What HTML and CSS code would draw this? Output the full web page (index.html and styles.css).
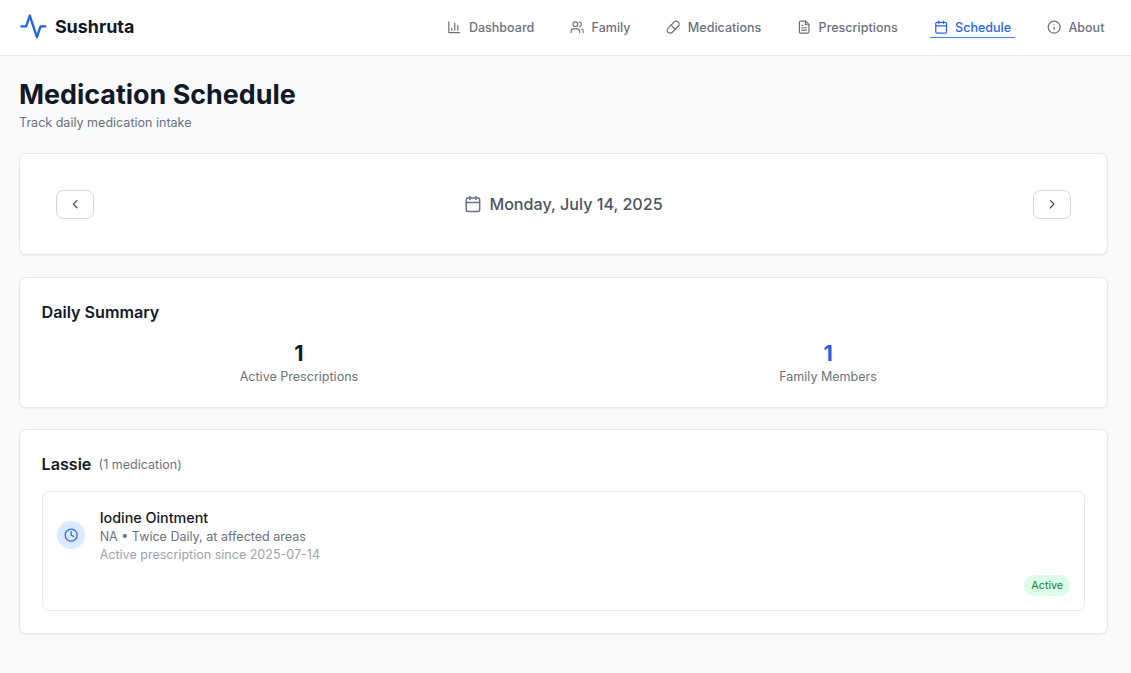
FILE: index.html
```html
<!DOCTYPE html>
<html lang="en">
<head>
<meta charset="utf-8">
<title>Sushruta</title>
<link rel="stylesheet" href="styles.css">
</head>
<body>
<header class="header">
  <div class="brand">
    <svg class="brand-icon" viewBox="0 0 24 24"><path d="M22 12h-4l-3 9L9 3l-3 9H2"/></svg>
    <span>Sushruta</span>
  </div>
  <nav class="nav">
    <a class="nav-link"><svg class="nav-icon" viewBox="0 0 24 24"><path d="M3 3v18h18"/><path d="M8 17v-3M13 17V5M18 17V9"/></svg>Dashboard</a>
    <a class="nav-link"><svg class="nav-icon" viewBox="0 0 24 24"><path d="M16 21v-2a4 4 0 0 0-4-4H6a4 4 0 0 0-4 4v2"/><circle cx="9" cy="7" r="4"/><path d="M22 21v-2a4 4 0 0 0-3-3.87M16 3.13a4 4 0 0 1 0 7.75"/></svg>Family</a>
    <a class="nav-link"><svg class="nav-icon" viewBox="0 0 24 24"><path d="m10.5 20.500 10-10a4.950 4.950 0 1 0-7-7l-10 10a4.950 4.950 0 1 0 7 7Z"/><path d="m8.500 8.500 7 7"/></svg>Medications</a>
    <a class="nav-link"><svg class="nav-icon" viewBox="0 0 24 24"><path d="M14.500 2H6a2 2 0 0 0-2 2v16a2 2 0 0 0 2 2h12a2 2 0 0 0 2-2V7.500L14.500 2z"/><path d="M14 2v6h6M16 13H8M16 17H8M10 9H8"/></svg>Prescriptions</a>
    <a class="nav-link nav-link-active"><svg class="nav-icon" viewBox="0 0 24 24"><rect x="3" y="4" width="18" height="18" rx="2"/><path d="M16 2v4M8 2v4M3 10h18"/></svg>Schedule</a>
    <a class="nav-link"><svg class="nav-icon" viewBox="0 0 24 24"><circle cx="12" cy="12" r="10"/><path d="M12 16v-4M12 8h.01"/></svg>About</a>
  </nav>
</header>
<main class="main">
  <h1 class="title">Medication Schedule</h1>
  <p class="subtitle">Track daily medication intake</p>
  <section class="card date-card">
    <button class="step"><svg class="step-icon" viewBox="0 0 24 24"><path d="m15 18-6-6 6-6"/></svg></button>
    <div class="date"><svg class="date-icon" viewBox="0 0 24 24"><rect x="3" y="4" width="18" height="18" rx="2"/><path d="M16 2v4M8 2v4M3 10h18"/></svg>Monday, July 14, 2025</div>
    <button class="step"><svg class="step-icon" viewBox="0 0 24 24"><path d="m9 18 6-6-6-6"/></svg></button>
  </section>
  <section class="card summary-card">
    <h2 class="heading">Daily Summary</h2>
    <div class="stats">
      <div class="stat"><div class="value">1</div><div class="label">Active Prescriptions</div></div>
      <div class="stat"><div class="value value-blue">1</div><div class="label">Family Members</div></div>
    </div>
  </section>
  <section class="card member-card">
    <div class="member"><h2 class="heading">Lassie</h2><span class="count">(1 medication)</span></div>
    <div class="medication">
      <div class="medication-row">
        <div class="clock"><svg class="nav-icon" viewBox="0 0 24 24"><circle cx="12" cy="12" r="10"/><path d="M12 6v6l4 2"/></svg></div>
        <div>
          <h3 class="name">Iodine Ointment</h3>
          <p class="dose">NA • Twice Daily, at affected areas</p>
          <p class="since">Active prescription since 2025-07-14</p>
        </div>
      </div>
      <span class="badge">Active</span>
    </div>
  </section>
</main>
</body>
</html>
```
FILE: styles.css
```css
* { box-sizing: border-box; margin: 0; }
body { background: #f9fafb; color: #111827; font-family: Inter, "Liberation Sans", sans-serif; font-size: 12.54px; line-height: 18px; min-height: 673px; }
svg { display: block; flex: none; fill: none; stroke: currentColor; stroke-width: 2; stroke-linecap: round; stroke-linejoin: round; }
.header { display: flex; align-items: center; justify-content: space-between; height: 56px; padding: 0 23px 2px 19px; background: #fff; border-bottom: 1px solid #e5e7eb; }
.brand { display: flex; align-items: center; gap: 7.2px; font-size: 17.92px; font-weight: 700; line-height: 25px; }
.brand-icon { width: 28.7px; height: 28.7px; color: #2563eb; }
.nav { display: flex; gap: 28.67px; padding-top: 2px; }
.nav-link { display: flex; align-items: center; gap: 7.17px; height: 21px; padding: 1px 3.58px 0; border-bottom: 1px solid transparent; color: #6b7280; font-weight: 500; }
.nav-link-active { color: #2563eb; border-color: #3b82f6; }
.nav-icon { width: 14.34px; height: 14.34px; }
.main { padding: 22px 23px 0 19px; }
.title { font-size: 26.88px; font-weight: 700; line-height: 32.4px; }
.subtitle { padding-top: 4px; color: #6b7280; }
.card { background: #fff; border: 1px solid #e5e7eb; border-radius: 7.2px; box-shadow: 0 1px 2px rgba(0, 0, 0, .05); }
.date-card { display: flex; align-items: center; justify-content: space-between; height: 102px; margin-top: 20.6px; padding: 0 36px; }
.step { display: flex; align-items: center; justify-content: center; width: 38px; height: 29px; padding: 0; background: #fff; border: 1px solid #d1d5db; border-radius: 7.2px; color: #374151; }
.step-icon { width: 14.34px; height: 14.34px; }
.date { display: flex; align-items: center; gap: 7.2px; color: #4b5563; font-size: 16.13px; font-weight: 500; line-height: 25px; }
.date-icon { width: 17.92px; height: 17.92px; color: #6b7280; }
.summary-card { height: 131px; margin-top: 22px; padding: 21.6px; }
.heading { font-size: 16.13px; font-weight: 600; line-height: 25.2px; }
.stats { display: grid; grid-template-columns: 1fr 1fr; gap: 14.4px; padding-top: 14px; text-align: center; }
.value { font-size: 21.5px; font-weight: 700; line-height: 28.8px; }
.value-blue { color: #2563eb; }
.label, .dose, .count { color: #6b7280; }
.member-card { height: 205px; margin-top: 21px; padding: 21.6px; }
.member { display: flex; align-items: center; gap: 7.2px; }
.count { padding-top: 1px; }
.medication { display: flex; flex-direction: column; justify-content: space-between; height: 120px; margin-top: 14px; padding: 15px 14px 14px; border: 1px solid #e5e7eb; border-radius: 7.2px; }
.medication-row { display: flex; align-items: center; gap: 14.4px; }
.clock { display: flex; align-items: center; justify-content: center; width: 28.67px; height: 28.67px; margin-bottom: 1px; border-radius: 50%; background: #dbeafe; color: #2563eb; }
.name { font-size: 14.34px; font-weight: 500; line-height: 21.6px; }
.since { color: #9ca3af; }
.badge { align-self: flex-end; padding: 2px 7.3px; border-radius: 11px; background: #dcfce7; color: #15803d; font-size: 10.75px; line-height: 17px; }
```
